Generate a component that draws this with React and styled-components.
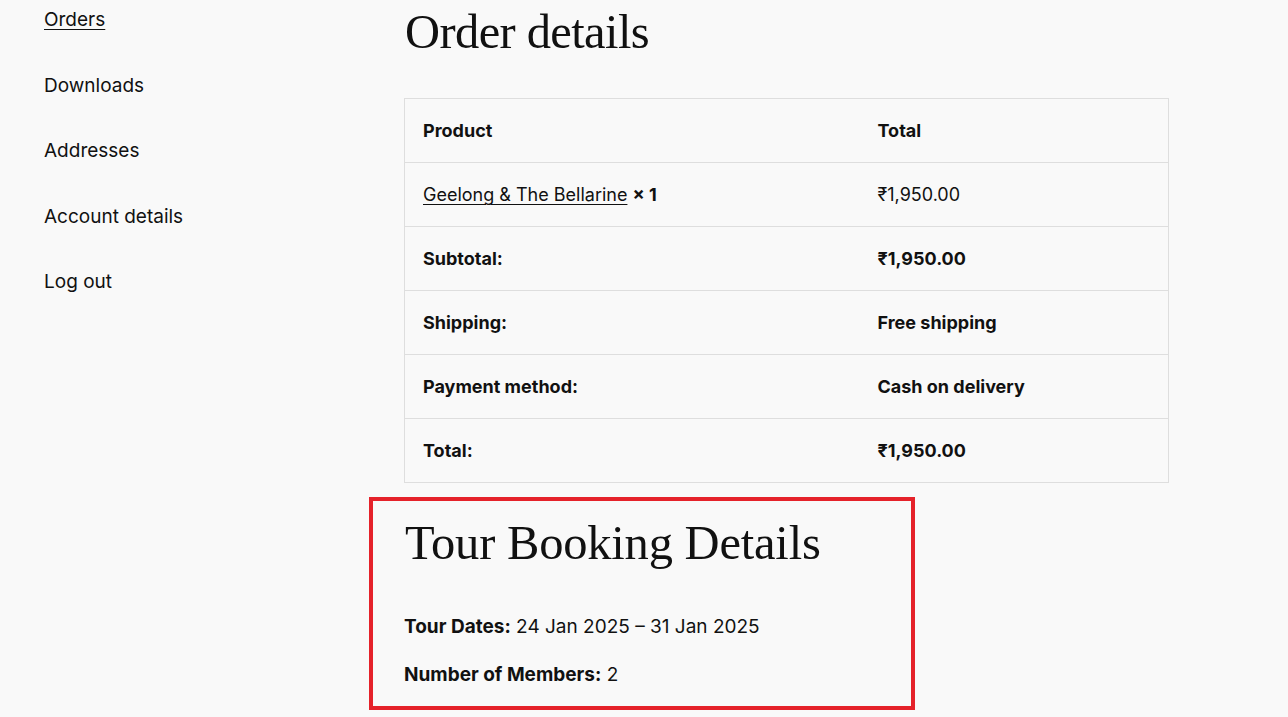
import React from "react";
import styled, { createGlobalStyle } from "styled-components";

const GlobalStyle = createGlobalStyle`
	html, body {
		margin: 0;
		padding: 0;
		background: #f9f9f9;
		color: #111111;
		font-family: Inter, "Noto Sans", sans-serif;
	}
`;

const Page = styled.div`
	display: grid;
	grid-template-columns: 360px 765px;
	padding-left: 44px;
	min-height: 717px;
	box-sizing: border-box;
`;

const Nav = styled.nav`
	display: flex;
	flex-direction: column;
	gap: 37.5px;
	padding-top: 6px;
`;

const NavLink = styled.a`
	font-size: 19px;
	line-height: 28px;
	color: #111111;
	text-decoration: ${props => (props.$active ? "underline" : "none")};
	text-underline-offset: 3px;
	text-decoration-thickness: 1px;
	cursor: pointer;
`;

const Main = styled.main`
	display: flex;
	flex-direction: column;
`;

const Heading = styled.h2`
	margin: 0 0 0 1px;
	font-family: "Liberation Serif", "DejaVu Serif", serif;
	font-weight: 400;
	font-size: 48.5px;
	line-height: 1.2;
	letter-spacing: -0.2px;
	color: #111111;
`;

const OrderHeading = styled(Heading)`
	margin-top: 3px;
	margin-bottom: 37px;
	letter-spacing: -0.6px;
`;

const Table = styled.table`
	width: 765px;
	table-layout: fixed;
	border-collapse: collapse;
	border: 1px solid #dedede;
	font-size: 18px;
`;

const Cell = styled.td`
	box-sizing: border-box;
	padding: 19px 18px;
	line-height: 25px;
	border-bottom: 1px solid #dedede;
	font-weight: ${props => (props.$bold ? 700 : 400)};
	text-align: left;
	width: ${props => props.$width || "auto"};
	vertical-align: middle;
`;

const HeadCell = styled(Cell).attrs({ as: "th" })`
	font-weight: 700;
`;

const ProductLink = styled.a`
	color: #111111;
	text-decoration: underline;
	text-underline-offset: 3px;
	text-decoration-thickness: 1px;
`;

const Qty = styled.strong`
	font-weight: 700;
`;

const BookingBox = styled.section`
	margin: 14px 0 0 -35px;
	width: 546px;
	box-sizing: border-box;
	border: 4px solid #e5222a;
	padding: 13px 31px 8px;
`;

const Detail = styled.p`
	margin: 0;
	font-size: 19px;
	line-height: 27px;
	padding: 10.5px 0;
`;

const DetailList = styled.div`
	display: flex;
	flex-direction: column;
	margin-top: 30px;
`;

const navItems = ["Orders", "Downloads", "Addresses", "Account details", "Log out"];

const rows = [
	{ label: "Subtotal:", value: "₹1,950.00" },
	{ label: "Shipping:", value: "Free shipping" },
	{ label: "Payment method:", value: "Cash on delivery" },
	{ label: "Total:", value: "₹1,950.00" },
];

const App = () => {
	return (
		<>
			<GlobalStyle />
			<Page>
				<Nav>
					{navItems.map((item, i) => (
						<NavLink key={item} $active={i === 0}>
							{item}
						</NavLink>
					))}
				</Nav>
				<Main>
					<OrderHeading>Order details</OrderHeading>
					<Table>
						<thead>
							<tr>
								<HeadCell $width="455px">Product</HeadCell>
								<HeadCell>Total</HeadCell>
							</tr>
						</thead>
						<tbody>
							<tr>
								<Cell>
									<ProductLink>Geelong &amp; The Bellarine</ProductLink>{" "}
									<Qty>× 1</Qty>
								</Cell>
								<Cell>₹1,950.00</Cell>
							</tr>
							{rows.map(row => (
								<tr key={row.label}>
									<Cell $bold>{row.label}</Cell>
									<Cell $bold>{row.value}</Cell>
								</tr>
							))}
						</tbody>
					</Table>
					<BookingBox>
						<Heading>Tour Booking Details</Heading>
						<DetailList>
							<Detail>
								<strong>Tour Dates:</strong> 24 Jan 2025 – 31 Jan 2025
							</Detail>
							<Detail>
								<strong>Number of Members:</strong> 2
							</Detail>
						</DetailList>
					</BookingBox>
				</Main>
			</Page>
		</>
	);
};

export default App;
